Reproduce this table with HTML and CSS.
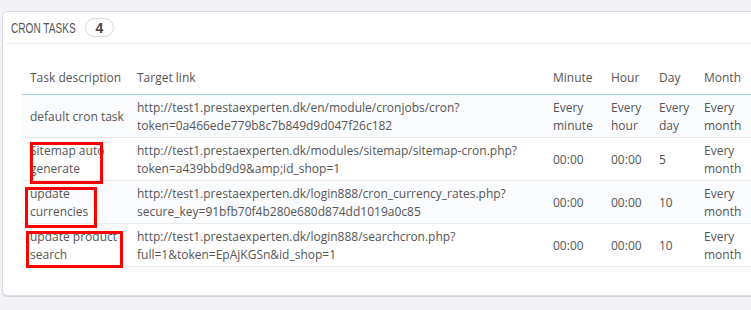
FILE: index.html
```html
<!DOCTYPE html>
<html lang="en">

<head>
  <meta charset="UTF-8">
  <meta name="viewport" content="width=device-width, initial-scale=1.0">
  <title>Cron tasks</title>
  <link rel="stylesheet" href="styles.css">
</head>

<body>
  <div class="panel">
    <div class="panel-heading">
      <span class="title">CRON TASKS</span>
      <span class="badge">4</span>
    </div>
    <table class="tasks">
      <colgroup>
        <col class="c-desc">
        <col class="c-link">
        <col class="c-min">
        <col class="c-hour">
        <col class="c-day">
        <col class="c-month">
      </colgroup>
      <thead>
        <tr>
          <th>Task description</th>
          <th>Target link</th>
          <th>Minute</th>
          <th>Hour</th>
          <th>Day</th>
          <th>Month</th>
        </tr>
      </thead>
      <tbody>
        <tr class="odd">
          <td>default cron task</td>
          <td>http://test1.prestaexperten.dk/en/module/cronjobs/cron?<br>token=0a466ede779b8c7b849d9d047f26c182</td>
          <td>Every<br>minute</td>
          <td>Every<br>hour</td>
          <td>Every<br>day</td>
          <td>Every<br>month</td>
        </tr>
        <tr>
          <td>Sitemap auto<br>generate</td>
          <td>http://test1.prestaexperten.dk/modules/sitemap/sitemap-cron.php?<br>token=a439bbd9d9&amp;amp;id_shop=1</td>
          <td>00:00</td>
          <td>00:00</td>
          <td>5</td>
          <td>Every<br>month</td>
        </tr>
        <tr class="odd">
          <td>update<br>currencies</td>
          <td>http://test1.prestaexperten.dk/login888/cron_currency_rates.php?<br>secure_key=91bfb70f4b280e680d874dd1019a0c85</td>
          <td>00:00</td>
          <td>00:00</td>
          <td>10</td>
          <td>Every<br>month</td>
        </tr>
        <tr>
          <td>update product<br>search</td>
          <td>http://test1.prestaexperten.dk/login888/searchcron.php?<br>full=1&amp;token=EpAjKGSn&amp;id_shop=1</td>
          <td>00:00</td>
          <td>00:00</td>
          <td>10</td>
          <td>Every<br>month</td>
        </tr>
      </tbody>
    </table>
  </div>

  <!-- red highlight boxes drawn over the screenshot -->
  <div class="mark mark-1"></div>
  <div class="mark mark-2"></div>
  <div class="mark mark-3"></div>
</body>

</html>
```

FILE: styles.css
```css
* {
  margin: 0;
  padding: 0;
  box-sizing: border-box;
}

html,
body {
  overflow: hidden;
}

body {
  font-family: 'Open Sans', 'Noto Sans', sans-serif;
  font-size: 12px;
  color: #555;
  background: #f3f2f7;
  height: 310px;
  padding: 11px 0 0 2px;
  position: relative;
}

.panel {
  width: 800px;
  background: white;
  border: 1px solid #dcdce4;
  border-radius: 5px;
  box-shadow: 0 1px 0 #d6d6de;
  padding: 0 3px 28px 3px;
}

.panel-heading {
  height: 32px;
  padding-left: 5px;
  border-bottom: 1px solid #eeeeee;
  display: flex;
  align-items: center;
  color: #555;
}

/* condensed heading font is not available, squeeze a regular one */
.panel-heading .title {
  display: inline-block;
  width: 66px;
  font-family: 'Liberation Sans', sans-serif;
  font-size: 14px;
  white-space: nowrap;
  transform: scaleX(0.72);
  transform-origin: left center;
}

.badge {
  display: inline-flex;
  align-items: center;
  justify-content: center;
  width: 29px;
  height: 19px;
  margin-left: 8px;
  border: 1px solid #d8d8d8;
  border-radius: 10px;
  font-family: 'Liberation Sans', sans-serif;
  font-weight: bold;
  font-size: 14px;
  color: #444;
}

.tasks {
  margin: 16px 0 0 16px;
  border-collapse: collapse;
  table-layout: fixed;
  width: 760px;
}

.c-desc { width: 107px; }
.c-link { width: 416px; }
.c-min { width: 58px; }
.c-hour { width: 48px; }
.c-day { width: 45px; }
.c-month { width: 86px; }

.tasks th {
  text-align: left;
  font-weight: normal;
  line-height: 18px;
  padding: 9px 4px 7px 8px;
  border-bottom: 1px solid #a3d3ea;
  white-space: nowrap;
}

.tasks td {
  line-height: 18px;
  padding: 4px 4px 2px 8px;
  border-bottom: 1px solid #eaedef;
  vertical-align: middle;
  white-space: nowrap;
}

.tasks tr.odd td {
  background: #fbfcfe;
}

.mark {
  position: absolute;
  border: 3px solid #ff0000;
}

.mark-1 {
  left: 30px;
  top: 142px;
  width: 73px;
  height: 42px;
}

.mark-2 {
  left: 25px;
  top: 187px;
  width: 72px;
  height: 41px;
}

.mark-3 {
  left: 26px;
  top: 231px;
  width: 97px;
  height: 37px;
}
```
